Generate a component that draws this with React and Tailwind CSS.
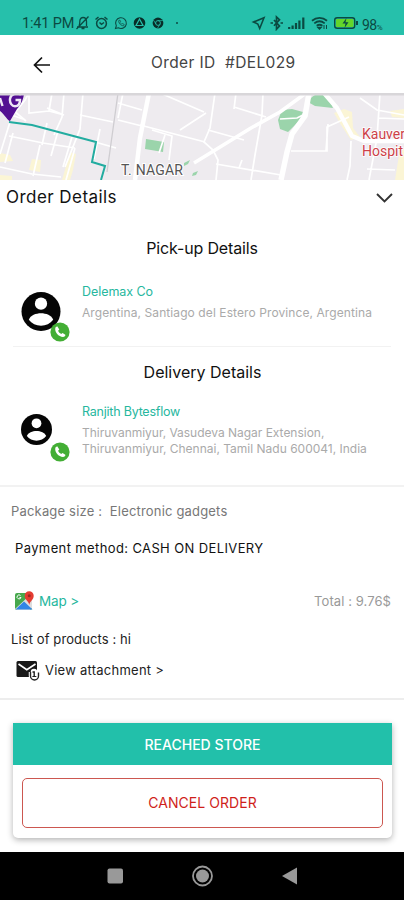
import React from "react";

const sans = "font-['Inter','Noto_Sans',sans-serif]";

function StatusBar() {
  return (
    <div className="flex h-[35px] shrink-0 items-end bg-[#26c0ab] pb-[4px] pl-[22px] text-[#0b4a42]">
      <span className="w-[53px] whitespace-nowrap font-['Roboto',sans-serif] text-[14.5px] leading-[14px] tracking-[-0.15px]">1:41 PM</span>
      <svg className="h-[16px] w-[110px]" viewBox="75 15 110 16" fill="none" stroke="currentColor" strokeWidth="1.3">
        <path d="M77 27h11M79 26c1-2 .6-4 1-6 .6-2 2-2.500 3-2.500 2.500 0 3.500 2 3.500 4v4.500M81.500 28.500h3M76.500 29L88.500 16.500" />
        <circle cx="101.500" cy="23.500" r="4.900" strokeWidth="1.500" />
        <path d="M95.500 19.500l3-2.500M107.500 19.500l-3-2.500M99.500 22.500l2 1.800 2.500-1.800" strokeWidth="1.500" />
        <path d="M115.500 28.500l.8-2.700a5.400 5.400 0 1 1 2 2z" strokeWidth="1.100" />
        <path d="M118.600 20.700c0 3 2.700 5.300 5 5.200l.6-1.500-1.700-.9-.8.7-1.700-1.700.6-.8-.7-1.600z" strokeWidth=".7" />
        <circle cx="139.500" cy="23" r="5.800" fill="#082d28" stroke="none" />
        <path d="M139.500 19l-3.500 6.500h7z" stroke="#26c0ab" strokeWidth="1.200" />
        <circle cx="158" cy="23" r="5.400" fill="#082d28" stroke="none" />
        <circle cx="158" cy="23" r="2.400" stroke="#26c0ab" strokeWidth=".9" />
        <path d="M158 20.600h4.800M156 24.200l-2.500-4M160 24.200l-2.500 4" stroke="#26c0ab" strokeWidth=".7" />
        <circle cx="177" cy="23" r="1" fill="currentColor" stroke="none" />
      </svg>
      <svg className="ml-[65px] h-[16px] w-[112px]" viewBox="250 15 112 16" fill="none" stroke="currentColor" strokeWidth="1.400">
        <path d="M253.500 22l10.500-4.300-4.300 10.800-1.900-4.500z" strokeWidth="1.600" />
        <path d="M274 20l5.500 6-3 3.200V17l3 2.800-5.500 6M270.500 23h2.500M280.500 23h2.500" strokeWidth="1.700" />
        <path d="M289.200 29v-2M292.600 29v-3.500M296 29v-6M299.400 29v-8.500M303.300 29V17.500" strokeWidth="2.200" />
        <path d="M312 20.800c4.500-3.800 10.500-3.800 15 0M314.300 23.400c3.200-2.600 7.200-2.600 10.400 0M316.700 25.800c2-1.500 3.800-1.500 5.700 0" strokeWidth="1.800" />
        <path d="M318 27.500h3l-1.500 1.500z" fill="currentColor" />
        <path d="M324 25v4M326.500 25v4" strokeWidth="1" />
        <rect x="334.700" y="17.700" width="20" height="10.600" rx="2.500" />
        <rect x="336" y="19" width="17.500" height="8" rx="1" fill="#63d52b" stroke="none" />
        <path d="M357 21v4" strokeWidth="2" />
        <path d="M346.500 18l-4 5.500h3l-1 4.500 4-5.700h-3z" fill="#0b4a42" stroke="none" />
      </svg>
      <span className="mb-[-2px] flex h-[16px] items-baseline font-['Roboto',sans-serif] text-[14px] leading-[16px] tracking-[-0.5px]">98<span className="text-[8px]">%</span></span>
    </div>
  );
}

function Header() {
  return (
    <header className="flex h-[58px] shrink-0 items-center pl-[33px]">
      <svg className="mt-[1px] h-[18px] w-[18px]" viewBox="0 0 18 18" fill="none" stroke="#111" strokeWidth="1.700">
        <path d="M17 9H2M9 1.500L1.500 9 9 16.500" />
      </svg>
      <h1 className="mb-[3px] ml-[100px] whitespace-pre text-[15.500px] leading-5 text-[#444] tracking-[0.38px]">Order ID  #DEL029</h1>
    </header>
  );
}

function RouteMap() {
  return (
    <svg className="block h-[87px] w-[404px] shrink-0" viewBox="0 0 404 87">
      <rect width="404" height="87" fill="#eeebef" />
      <g fill="#fbf5d5">
        <path d="M0 60l10 2 3 6-13 1zM32 66l9 1-1 12-11-2zM70 59l6 2-3 16-3 10h-8zM0 82l12 1v4H0z" />
        <path d="M334 20l10-4 8 3 1 16 7 9-9 3-10-15zM390 18l14-2v9l-12-1zM399 62l5-7v32h-9z" />
      </g>
      <g fill="#9bd4ab">
        <path d="M146 46l18 3-1 10-18-3zM184 70l6-3-2 4-4 2zM193 80l5-2-2 4-4 1z" />
        <path d="M282 17l10-1 11 3-4 9-11 11-8-3-2-9zM318 0h9l6 15-18-2-7-4 4-5z" />
      </g>
      <g fill="none" stroke="#fff" strokeWidth="1.700">
        <path d="M0 18l23 8M10 29L0 61M9 27l16-20 4-7M29 0v20l20-2 15 4M49 18L52 0M64 22L47 15M64 0l-2 24-8 18M83 0l-3 36-15 38M80 22l33 7M9 43l34 7 32 5M13 40L5 70M40 52l-7 31M58 38l-7 25M75 55l-9 32M0 74l32 7 29 3M95 49l21 6M100 36l-6 30M118 10l24 7M118 27l24 6M123 0l-5 25" />
        <path d="M14 18l12 10M72 44l-9 30M47 30l-5 22M140 32l65 17M152 37l20 6-3 24M160 0l44 19M206 20l-26 17M165 42l-6 18" />
        <path d="M215 0l-5 35-6 14 9 8 5 10-2 20M236 0l-2 16M208 37l36 10M234 14l32 10M263 0l-1 22-7 40-4 25M216 71l65 11M242 67l-3 8M291 58h36v-24l22-10M326 58l2-27M351 48l-1 25-3 14M380 0l-3 45-8 42M360 5l17 12 27 5M367 76l28 1M378 25l26 1" />
        <path d="M280 26l17-1 6-3" />
      </g>
      <g fill="none" stroke="#fff" strokeLinejoin="round">
        <path d="M149 0l-9 45-5 42" strokeWidth="4.500" />
        <path d="M194 70l57-35 29-16 26-19" strokeWidth="3.600" />
        <path d="M309 0l-4 23-13 18-5 18-6 28" strokeWidth="5.500" />
        <path d="M324 0l13 15 15 28 12 5h40" strokeWidth="4.500" />
      </g>
      <path d="M118 0l-4 29-7 50" fill="none" stroke="#cfcdd1" strokeWidth="1.300" />
      <path d="M9 29l23 3 64 17-4 20 13 4-4 14" fill="none" stroke="#22aca0" strokeWidth="2" />
      <path d="M0 0h24c0 6-4 13-7 16l-7 12c-2 0-5-6-10-10z" fill="#531092" />
      <path d="M21 1.500C16-.5 10.500 1 10 6c-.5 4 2 7.300 5 7.300 3.500 0 5-3 5-6.300h-4.500M0 5l2.500 8" fill="none" stroke="#eee7f5" strokeWidth="2.400" />
      <text x="121" y="82" fill="#555" stroke="#fff" strokeWidth="2" paintOrder="stroke" fontFamily="Roboto, sans-serif" fontSize="14" textLength="62">T. NAGAR</text>
      <g fill="#cd3f48" stroke="#fff" strokeWidth="1.500" paintOrder="stroke" fontFamily="Roboto, sans-serif" fontSize="14">
        <text x="362" y="46">Kauver</text>
        <text x="362" y="63">Hospit</text>
      </g>
      <rect width="404" height="2.500" fill="#d8d6d9" />
    </svg>
  );
}

function PhoneBadge() {
  return (
    <svg className="absolute bottom-0 left-[29px] h-[20px] w-[20px]" viewBox="0 0 20 20">
      <circle cx="10" cy="10" r="9.600" fill="#43ae35" />
      <path d="M5.400 5.500l1.800-1.200 2.100 3.200-1.200 1.300c.6 1.500 1.700 2.500 3.100 3.200l1.400-1.100 3 2.100-1.300 1.800c-4.600 1.100-10.200-4.200-8.900-9.300z" fill="#fff" />
    </svg>
  );
}

function Avatar({ size }) {
  return (
    <svg className={size} viewBox="0 0 40 40">
      <circle cx="20" cy="20" r="20" fill="#050505" />
      <circle cx="20" cy="12" r="6.300" fill="#fff" />
      <path d="M7.500 28.500C9 23.800 15 21.800 20 21.800s11 2 12.500 6.700C29.500 32.500 25 34.500 20 34.500s-9.500-2-12.500-6z" fill="#fff" />
    </svg>
  );
}

export default function App() {
  return (
    <div className={`flex h-[900px] w-[404px] flex-col overflow-hidden bg-white ${sans}`}>
      <StatusBar />
      <Header />
      <RouteMap />

      <div className="flex h-[34px] shrink-0 items-center justify-between pl-[6px] pr-[11px]">
        <h2 className="text-[17px] leading-6 tracking-[0.45px] text-[#111]">Order Details</h2>
        <svg className="mt-[2px] h-[10px] w-[17px]" viewBox="0 0 17 10" fill="none" stroke="#333" strokeWidth="1.900">
          <path d="M1 1l7.500 7.500L16 1" />
        </svg>
      </div>

      <section className="mx-[13px] flex h-[133px] shrink-0 flex-col border-b border-[#f2f2f2]">
        <h3 className="mt-[22px] h-6 text-center text-[16px] leading-6 tracking-[-0.15px] text-[#111]">Pick-up Details</h3>
        <div className="mt-[24px] flex">
          <div className="relative ml-[8px] h-[58px] w-[61px] pt-[8px]">
            <Avatar size="h-[39px] w-[40px]" />
            <PhoneBadge />
          </div>
          <div className="whitespace-nowrap">
            <p className="text-[12.500px] leading-[15px] tracking-[-0.05px] text-[#26b79e]">Delemax Co</p>
            <p className="mt-[6px] text-[12px] leading-[16px] tracking-[0.09px] text-[#aaa]">Argentina, Santiago del Estero Province, Argentina</p>
          </div>
        </div>
      </section>

      <section className="flex h-[140px] shrink-0 flex-col border-b-2 border-[#f2f2f2] px-[13px]">
        <h3 className="mt-[13px] h-6 pl-[1px] text-center text-[16px] leading-6 text-[#111]">Delivery Details</h3>
        <div className="mt-[20px] flex">
          <div className="relative ml-[8px] h-[58px] w-[61px] pt-[10px]">
            <Avatar size="h-[31px] w-[31px]" />
            <PhoneBadge />
          </div>
          <div className="whitespace-nowrap">
            <p className="text-[12.500px] leading-[15px] tracking-[-0.22px] text-[#26b79e]">Ranjith Bytesflow</p>
            <p className="mt-[6px] text-[12px] leading-[15.500px] tracking-[-0.02px] text-[#aaa]">Thiruvanmiyur, Vasudeva Nagar Extension,</p>
            <p className="text-[12px] leading-[15.500px] text-[#aaa]">Thiruvanmiyur, Chennai, Tamil Nadu 600041, India</p>
          </div>
        </div>
      </section>

      <section className="flex h-[213px] shrink-0 flex-col border-b-2 border-[#ededed] text-[13px] leading-[18px]">
        <p className="mt-[15px] whitespace-pre pl-[11px] tracking-[0.18px] text-[#777]">Package size :  Electronic gadgets</p>
        <p className="mt-[19px] pl-[15px] tracking-[0.38px] text-[#111]">Payment method: CASH ON DELIVERY</p>
        <div className="mt-[34px] flex h-[20px] items-center pl-[14px] pr-[13px]">
          <svg className="h-[20px] w-[20px]" viewBox="0 0 20 20">
            <rect x="1" y="2" width="17" height="17" rx="2" fill="#47a84d" />
            <path d="M1 18L16 4l2 2v11l-2 2H3z" fill="#ddd" />
            <path d="M1.500 18.500l8.500-8 8.500 8z" fill="#3285e6" />
            <path d="M6.500 4.500a2 2 0 1 0 .5 2H5.500" fill="none" stroke="#fff" strokeWidth="1" />
            <path d="M15.300 14c-.4-4-4.600-5-4.600-9.300a4.500 4.500 0 0 1 9 0c0 4.300-4 5.300-4.400 9.300z" fill="#e43c32" />
            <circle cx="15.200" cy="4.700" r="1.500" fill="#9c2922" />
          </svg>
          <span className="ml-[5px] text-[13.500px] tracking-[-0.15px] text-[#26b79e]">Map &gt;</span>
          <span className="ml-auto text-[13px] tracking-[0.08px] text-[#999]">Total : 9.76$</span>
        </div>
        <p className="mt-[19px] pl-[11px] tracking-[0.1px] text-[#222]">List of products : hi</p>
        <div className="mt-[11px] flex h-[22px] items-center pl-[16px]">
          <svg className="h-[21px] w-[24px]" viewBox="0 0 24 21">
            <rect x=".5" y="1" width="20.500" height="16" rx="1.500" fill="#181818" />
            <path d="M2.500 4l8.300 5.800L19.500 4" fill="none" stroke="#fff" strokeWidth="1.700" />
            <path d="M14.500 12v4a4 4 0 0 0 8 0v-3.500M16.500 16v-4a1.500 1.500 0 0 1 3 0v4" fill="none" stroke="#fff" strokeWidth="3.500" />
            <path d="M14.500 12v4a4 4 0 0 0 8 0v-3.500M16.500 12h1.700v4.500" fill="none" stroke="#222" strokeWidth="1.400" />
          </svg>
          <span className="ml-[5px] tracking-[0.25px] text-[#222]">View attachment &gt;</span>
        </div>
      </section>

      <div className="flex min-h-0 flex-1 flex-col px-[13px] pt-[23px]">
        <div className="h-[115px] w-[379px] shrink-0 rounded-b-[5px] bg-white shadow-[0_2px_6px_rgba(0,0,0,0.3)]">
          <button className="block h-[42px] w-full bg-[#22c0aa] text-[14px] font-medium text-white">REACHED STORE</button>
          <button className="mx-[9px] mt-[13px] block h-[50px] w-[361px] rounded-[5px] border border-[#cc5750] pb-[2px] text-[14px] tracking-[0.05px] text-[#cf1f1b]">CANCEL ORDER</button>
        </div>
      </div>

      <nav className="h-[48px] shrink-0 bg-black">
        <svg className="block h-[48px] w-[404px]" viewBox="0 0 404 48">
          <rect x="107.500" y="16.500" width="15.500" height="15" rx="2" fill="#999" />
          <circle cx="202.500" cy="24" r="9.500" fill="none" stroke="#999" strokeWidth="1.800" />
          <circle cx="202.500" cy="24" r="6.500" fill="#999" />
          <path d="M282 24l15-8.500v17z" fill="#999" />
        </svg>
      </nav>
    </div>
  );
}
